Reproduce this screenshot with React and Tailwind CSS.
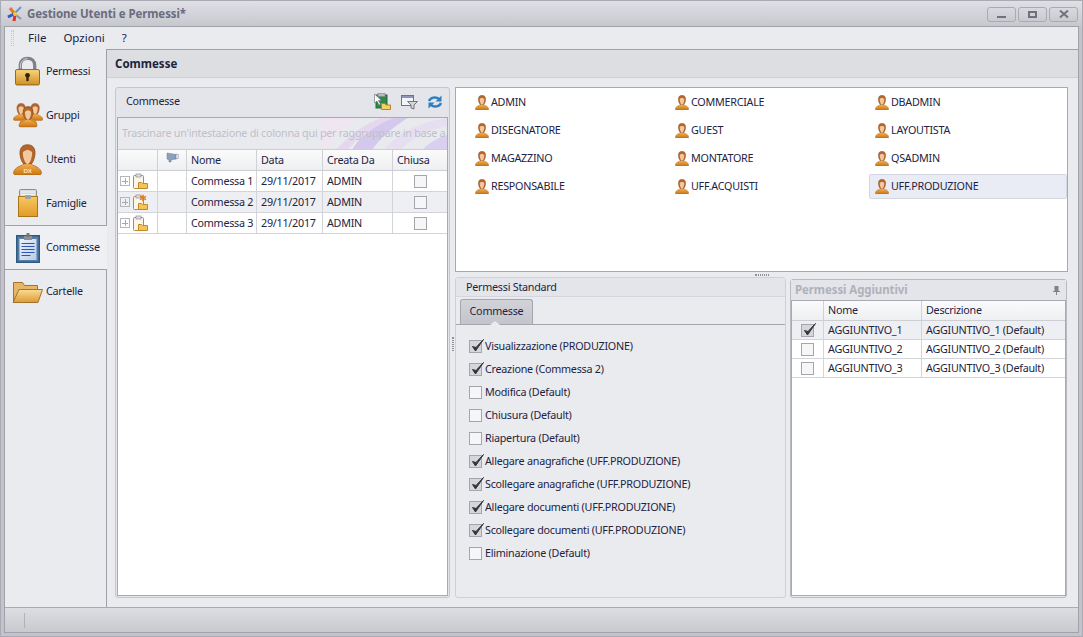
import React from "react";

const FONT = "font-['Noto_Sans','DejaVu_Sans',sans-serif]";
const ink = "text-[#1d2340]";

function Padlock() {
  return (
    <svg width="25" height="30" viewBox="0 0 26 30">
      <defs>
        <linearGradient id="lockB" x1="0" y1="0" x2="0" y2="1"><stop offset="0" stopColor="#f8d67c" /><stop offset="1" stopColor="#cf8f24" /></linearGradient>
      </defs>
      <path d="M5.500 14V9C5.500 4.500 8.500 1.800 13 1.800S20.500 4.500 20.500 9v5" fill="none" stroke="#7f8188" strokeWidth="3.400" />
      <path d="M5.800 12V9C5.800 5 8.800 2.200 13 2.200" fill="none" stroke="#d9dade" strokeWidth="1" />
      <rect x=".5" y="13.500" width="25" height="16" rx="1.500" fill="url(#lockB)" stroke="#96621a" />
      <circle cx="13" cy="19.500" r="2.500" fill="#33240e" />
      <rect x="11.800" y="19.500" width="2.400" height="6" fill="#33240e" />
    </svg>
  );
}

function Person({ x = 0, y = 0, s = 1, id = "p" }) {
  return (
    <g transform={`translate(${x} ${y}) scale(${s})`}>
      <path d="M0.500 28c.5-4 4-6 8.500-7.500l2-2h6l2 2c4.500 1.500 8 3.500 8.500 7.500 0 1.200-1 2-2 2H2.500c-1 0-2-.8-2-2z" fill={`url(#${id}B)`} stroke="#a9640f" strokeWidth=".7" />
      <path d="M14 .7c4.800 0 7.300 3 7.300 7.800 0 5-2.300 9.500-3.300 10.500h-8c-1-1-3.300-5.500-3.300-10.500C6.700 3.700 9.200.7 14 .7z" fill="#b4652a" stroke="#8a4c1c" strokeWidth=".7" />
      <path d="M9.500 8c1.500-1.500 2.500-2 4.500-2.500 2 .5 3 1 4.500 2.500.3 4-2 11.500-4.500 11.500S9.200 12 9.500 8z" fill="#f1c8a0" />
    </g>
  );
}

function PersonDefs({ id }) {
  return (
    <defs>
      <linearGradient id={`${id}B`} x1="0" y1="0" x2="0" y2="1"><stop offset="0" stopColor="#f5b355" /><stop offset="1" stopColor="#cc7512" /></linearGradient>
    </defs>
  );
}

function Group() {
  return (
    <svg width="30" height="27" viewBox="0 0 30 27">
      <PersonDefs id="g" />
      <Person id="g" x={0} y={1} s={0.58} />
      <Person id="g" x={14} y={1} s={0.58} />
      <Person id="g" x={6.500} y={4} s={0.62} />
      <Person id="g" x={5.500} y={4.500} s={0.68} />
    </svg>
  );
}

function User() {
  return (
    <svg width="29" height="31" viewBox="0 0 28 30">
      <PersonDefs id="u" />
      <Person id="u" />
      <text x="14" y="28" textAnchor="middle" fontSize="6" fontWeight="700" fill="#fbe3bd" fontFamily="Liberation Sans">DX</text>
    </svg>
  );
}

function SmallUser({ id }) {
  return (
    <svg width="14" height="15" viewBox="0 0 28 30" className="shrink-0">
      <PersonDefs id={id} />
      <Person id={id} />
    </svg>
  );
}

function BoxFolder() {
  return (
    <svg width="20" height="28" viewBox="0 0 20 28">
      <defs>
        <linearGradient id="bf" x1="0" y1="0" x2="0" y2="1"><stop offset="0" stopColor="#f6c964" /><stop offset="1" stopColor="#e29a25" /></linearGradient>
      </defs>
      <rect x="1.500" y=".5" width="17" height="9" rx="1" fill="#d8dade" stroke="#8b8d94" />
      <path d="M3 3h14M3 5.500h14" stroke="#f1f2f4" />
      <rect x=".5" y="7.500" width="19" height="20" fill="url(#bf)" stroke="#a8741c" />
      <rect x="7" y="6" width="6" height="4" rx="1" fill="#9fa1a8" />
    </svg>
  );
}

function Clipboard() {
  return (
    <svg width="24" height="31" viewBox="0 0 24 31">
      <defs>
        <linearGradient id="cl" x1="0" y1="0" x2="1" y2="1"><stop offset="0" stopColor="#eef3fb" /><stop offset="1" stopColor="#b8cdea" /></linearGradient>
      </defs>
      <rect x=".75" y="3.750" width="22.500" height="26.500" fill="#5b7da5" stroke="#2c5a80" strokeWidth="1.500" />
      <rect x="3.500" y="7" width="17" height="21" fill="url(#cl)" />
      <rect x="8" y="4" width="8" height="4" fill="#8d8f96" />
      <rect x="10.500" y="1" width="3" height="4" fill="#77797f" />
      <path d="M5.500 11.500h13M5.500 14.500h13M5.500 17.500h13M5.500 20.500h13M5.500 23.500h9" stroke="#2f55b8" />
    </svg>
  );
}

function BigFolder() {
  return (
    <svg width="31" height="23" viewBox="0 0 31 23">
      <defs>
        <linearGradient id="ff" x1="0" y1="0" x2="0" y2="1"><stop offset="0" stopColor="#fbdb95" /><stop offset="1" stopColor="#dd9a36" /></linearGradient>
      </defs>
      <path d="M1.500 21V2.500h9l2 3h13v4H8z" fill="#e6b765" stroke="#a5722a" />
      <path d="M1 22.500 7 9.500h23.500l-4.500 13z" fill="url(#ff)" stroke="#a5722a" />
    </svg>
  );
}

function SmallClip({ star }) {
  return (
    <svg width="15" height="16" viewBox="0 0 15 16" className="shrink-0">
      <rect x=".5" y="2.500" width="10" height="13" rx="1" fill="#fdf6e6" stroke="#b88a3a" />
      <rect x="3" y="1" width="5" height="3" fill="#dfe0e4" stroke="#8b8d94" strokeWidth=".7" />
      <path d="M5.500 9.500h3l1 1h5v5h-9z" fill="#f6c355" stroke="#c2892a" />
      {star && <path d="M10 .8v6.400M7 2.400l6 3.200M13 2.400 7 5.600" stroke="#e07a1c" strokeWidth="1.500" />}
    </svg>
  );
}

function Check({ on }) {
  return (
    <span className={`relative block w-[13px] h-[13px] shrink-0 border border-[#a4a5ad] ${on ? "bg-[#d5d6dc]" : "bg-[#f6f6f8]"}`}>
      {on && (
        <svg width="17" height="17" viewBox="0 0 17 17" className="absolute left-[-1px] top-[-4px]">
          <path d="M3.500 9.500 6.500 14 14.500 2.500 7 10.500z" fill="#33353d" stroke="#33353d" strokeWidth="1" strokeLinejoin="round" />
        </svg>
      )}
    </span>
  );
}

function NavItem({ icon, label, active, top }) {
  return (
    <div className={`h-[44px] flex items-center shrink-0 ${active ? "bg-[#eef0f4]" : "border-r border-[#9fa0a8]"} ${top ? "border-t border-[#9fa0a8]" : ""}`}>
      <div className="w-[41px] flex justify-center shrink-0 pl-[4px]">{icon}</div>
      <span className={`${ink}`}>{label}</span>
    </div>
  );
}

function Grip({ vertical }) {
  return vertical ? (
    <div className="w-[2px] h-[14px] border-x border-dotted border-[#8f9098]" />
  ) : (
    <div className="w-[14px] h-[2px] border-y border-dotted border-[#8f9098]" />
  );
}

const cell = "border-r border-b border-[#d3d4da] flex items-center overflow-hidden whitespace-nowrap";

function GridRow({ n, star, alt }) {
  return (
    <div className={`flex h-[21px] shrink-0 ${alt ? "bg-[#eeeff2]" : "bg-white"}`}>
      <div className={`${cell} w-[40px] pl-[2px] gap-[3px]`}>
        <span className="w-[10px] h-[10px] border border-[#b5b6bd] flex items-center justify-center shrink-0 relative">
          <span className="w-[6px] h-[1px] bg-[#a5a6ae] absolute" />
          <span className="w-[1px] h-[6px] bg-[#a5a6ae] absolute" />
        </span>
        <SmallClip star={star} />
      </div>
      <div className={`${cell} w-[29px]`} />
      <div className={`${cell} w-[70px] pl-[4px]`}>Commessa {n}</div>
      <div className={`${cell} w-[66px] pl-[4px]`}>29/11/2017</div>
      <div className={`${cell} w-[70px] pl-[4px]`}>ADMIN</div>
      <div className={`${cell} flex-1 justify-center border-r-0`}><Check /></div>
    </div>
  );
}

const headCell = "border-r border-[#d0d1d7] flex items-center whitespace-nowrap";

const users = ["ADMIN", "COMMERCIALE", "DBADMIN", "DISEGNATORE", "GUEST", "LAYOUTISTA", "MAGAZZINO", "MONTATORE", "QSADMIN", "RESPONSABILE", "UFF.ACQUISTI", "UFF.PRODUZIONE"];

const perms = [
  ["Visualizzazione (PRODUZIONE)", true],
  ["Creazione (Commessa 2)", true],
  ["Modifica (Default)", false],
  ["Chiusura (Default)", false],
  ["Riapertura (Default)", false],
  ["Allegare anagrafiche (UFF.PRODUZIONE)", true],
  ["Scollegare anagrafiche (UFF.PRODUZIONE)", true],
  ["Allegare documenti (UFF.PRODUZIONE)", true],
  ["Scollegare documenti (UFF.PRODUZIONE)", true],
  ["Eliminazione (Default)", false],
];

export default function App() {
  return (
    <div className={`w-[1083px] h-[637px] flex flex-col overflow-hidden bg-[#c3c4cb] border-x border-b border-[#a9aab3] ${FONT} text-[10.750px] tracking-[-0.25px] leading-none ${ink}`}>
      {/* title */}
      <div className="h-[26px] shrink-0 flex items-center bg-gradient-to-b from-[#dfe0e4] to-[#c7c8ce] border-t border-[#a9aab3] pl-[6px] pr-[4px]">
        <svg width="16" height="16" viewBox="0 0 16 16" className="shrink-0">
          <path d="M3 2l4 5" stroke="#e0792a" strokeWidth="3" />
          <path d="M14 1L8 7" stroke="#6f8fd0" strokeWidth="2" />
          <path d="M1 11l6-3" stroke="#3a54c8" strokeWidth="3" />
          <path d="M8 9l-1 6" stroke="#d8352e" strokeWidth="3" />
          <path d="M9 9l5 4" stroke="#8b94a8" strokeWidth="2" />
          <circle cx="8" cy="8" r="2" fill="#f2c92e" />
        </svg>
        <span className="ml-[4px] font-bold text-[#6a6c7f] text-[11.500px] tracking-[-0.1px]">Gestione Utenti e Permessi*</span>
        <div className="ml-auto flex gap-[2px] pt-[1px]">
          {["min", "max", "close"].map((k) => (
            <div key={k} className="w-[29px] h-[15px] rounded-[3px] border border-[#a9aab3] bg-gradient-to-b from-[#d9dadf] to-[#c9cad0] flex items-center justify-center">
              {k === "min" && <span className="w-[9px] h-[2px] bg-[#70717c] mt-[5px]" />}
              {k === "max" && <span className="w-[9px] h-[7px] border-2 border-[#70717c]" />}
              {k === "close" && (
                <svg width="10" height="8" viewBox="0 0 10 8"><path d="M1 .5l8 7M9 .5l-8 7" stroke="#70717c" strokeWidth="2" /></svg>
              )}
            </div>
          ))}
        </div>
      </div>
      {/* body */}
      <div className="flex-1 min-h-0 mx-[3px] border border-[#a0a1a9] flex flex-col bg-[#eaebef]">
        <div className="h-[22px] shrink-0 flex items-center text-[11.500px] tracking-normal pl-[6px]">
          <div className="w-[3px] h-[16px] border-x border-dotted border-[#c5c6cc] mr-[14px]" />
          <span>File</span>
          <span className="ml-[17px]">Opzioni</span>
          <span className="ml-[17px]">?</span>
        </div>
        <div className="flex-1 min-h-0 flex">
          {/* nav */}
          <div className="w-[102px] shrink-0 flex flex-col">
            <NavItem icon={<Padlock />} label="Permessi" />
            <NavItem icon={<Group />} label="Gruppi" />
            <NavItem icon={<User />} label="Utenti" />
            <NavItem icon={<BoxFolder />} label="Famiglie" />
            <NavItem active top icon={<Clipboard />} label="Commesse" />
            <NavItem top icon={<BigFolder />} label="Cartelle" />
            <div className="flex-1 border-r border-[#9fa0a8]" />
          </div>
          {/* main */}
          <div className="flex-1 min-w-0 flex flex-col border-t border-[#9fa0a8]">
            <div className="h-[28px] shrink-0 bg-[#dddee2] border-b border-[#cfd0d6] flex items-center pl-[8px] font-bold text-[11.500px] tracking-normal">Commesse</div>
            <div className="flex-1 min-h-0 flex pl-[8px] pr-[10px] pt-[9px] pb-[9px]">
              {/* left card */}
              <div className="w-[335px] shrink-0 flex flex-col rounded-[3px] border border-[#c6c7cd] bg-[#e4e5ea]">
                <div className="h-[29px] shrink-0 flex items-center pl-[10px] pr-[6px] pb-[2px]">
                  <span>Commesse</span>
                  <div className="ml-auto flex items-center gap-[10px]">
                    <svg width="17" height="17" viewBox="0 0 17 17">
                      <rect x="2" y="2" width="11" height="13" fill="#2f8a4a" stroke="#1f6a38" />
                      <rect x="4" y=".5" width="7" height="3" fill="#b9bbc2" stroke="#7f8188" strokeWidth=".6" />
                      <path d="M.5 1v9l2.500-2 2 4 1.500-.8-2-3.700h3z" fill="#fff" stroke="#6d7078" strokeWidth=".6" />
                      <path d="M7.500 10.500h3.500l1 1.500h4.500v4.500h-9z" fill="#f8cf62" stroke="#b98428" />
                    </svg>
                    <svg width="17" height="16" viewBox="0 0 17 16">
                      <rect x=".5" y="1.500" width="12" height="10" fill="#f4f5f8" stroke="#6c70a0" />
                      <rect x="1" y="2" width="11" height="2" fill="#8f93c0" />
                      <path d="M6.500 7.500h10l-3.500 3.500v4l-3-1v-3z" fill="#d4d5da" stroke="#75767e" />
                    </svg>
                    <svg width="16" height="14" viewBox="0 0 16 14" className="-ml-[1px]">
                      <path d="M2 6a6 5 0 0 1 10-2" fill="none" stroke="#2f7ec0" strokeWidth="2.500" />
                      <path d="M14.500 .5v6h-6z" fill="#2f7ec0" />
                      <path d="M14 8a6 5 0 0 1-10 2" fill="none" stroke="#2f7ec0" strokeWidth="2.500" />
                      <path d="M1.500 13.500v-6h6z" fill="#2f7ec0" />
                    </svg>
                  </div>
                </div>
                <div className="flex-1 min-h-0 mx-[1px] mb-[1px] border border-[#a8a9b1] flex flex-col bg-white">
                  <div className="relative h-[32px] shrink-0 bg-[#e9eaee] border-b border-[#cdced4] flex items-center pl-[4px] overflow-hidden whitespace-nowrap">
                    <svg width="125" height="32" viewBox="0 0 125 32" className="absolute right-0 top-0">
                      <path d="M0 0h34C22 10 10 22 2 32H0z" fill="#f0e6f2" />
                      <path d="M14 32C28 16 44 6 58 0h14C50 8 34 20 26 32z" fill="#e5d8ee" />
                      <path d="M30 32C40 14 60 4 72 0h14C72 8 58 20 50 32z" fill="#d4c8ec" />
                      <path d="M62 32C76 14 98 4 125 0v8C105 12 88 22 78 32z" fill="#e6def1" />
                      <path d="M100 32c6-6 14-12 25-15v15z" fill="#d8d0ee" />
                    </svg>
                    <span className="relative text-[#bfc0c8]">Trascinare un'intestazione di colonna qui per raggruppare in base a</span>
                  </div>
                  <div className="flex h-[21px] shrink-0 bg-gradient-to-b from-[#fbfbfc] to-[#eeeff2] border-b border-[#cdced4]">
                    <div className={`${headCell} w-[40px]`} />
                    <div className={`${headCell} w-[29px] justify-center items-start pt-[2px]`}>
                      <svg width="13" height="11" viewBox="0 0 13 11">
                        <path d="M1 1l9 1.500V7L5 8v2H3V8L1 7z" fill="#8aa0bd" stroke="#6d7d94" strokeWidth=".5" />
                        <path d="M10 2l3 1v3l-3 1z" fill="#e3e6ec" stroke="#6d7d94" strokeWidth=".5" />
                      </svg>
                    </div>
                    <div className={`${headCell} w-[70px] pl-[4px]`}>Nome</div>
                    <div className={`${headCell} w-[66px] pl-[4px]`}>Data</div>
                    <div className={`${headCell} w-[70px] pl-[4px]`}>Creata Da</div>
                    <div className="flex-1 flex items-center pl-[4px]">Chiusa</div>
                  </div>
                  <GridRow n={1} />
                  <GridRow n={2} star alt />
                  <GridRow n={3} />
                </div>
              </div>
              {/* vertical splitter */}
              <div className="w-[5px] shrink-0 flex justify-center items-start pt-[250px]">
                <Grip vertical />
              </div>
              {/* right column */}
              <div className="flex-1 min-w-0 flex flex-col">
                <div className="h-[185px] shrink-0 border border-[#a8a9b1] bg-white grid grid-cols-[200px_200px_198px] auto-rows-[28px] pl-[14px]">
                  {users.map((u, i) => (
                    <div key={u} className={`flex items-center gap-[2px] pl-[5px] whitespace-nowrap ${u === "UFF.PRODUZIONE" ? "bg-[#e9ebf5] rounded-[2px] border border-[#d5d7e0] -ml-[1px] mr-[1px] mb-[1px] mt-[2px]" : ""}`}>
                      <SmallUser id={`s${i}`} />
                      <span>{u}</span>
                    </div>
                  ))}
                </div>
                <div className="h-[5px] shrink-0 flex items-center justify-center">
                  <Grip />
                </div>
                <div className="flex-1 min-h-0 flex gap-[4px]">
                  {/* standard */}
                  <div className="w-[331px] shrink-0 rounded-[3px] border border-[#cfd0d6] flex flex-col">
                    <div className="h-[19px] shrink-0 flex items-center pl-[10px] bg-[#e4e5ea] border-b border-[#d6d7dc]">Permessi Standard</div>
                    <div className="relative h-[28px] shrink-0 pl-[4px] pt-[2px] border-b border-[#a4a5ad]">
                      <div className="w-[73px] h-[25px] pb-[1px] rounded-t-[3px] border border-b-0 border-[#a4a5ad] bg-gradient-to-b from-[#d2d3d9] to-[#c4c5cc] flex items-center justify-center">Commesse</div>
                      <div className="absolute left-[34px] bottom-[-1px] w-0 h-0 border-x-[5px] border-x-transparent border-b-[4px] border-b-[#eaebef]" />
                    </div>
                    <div className="flex flex-col gap-[10px] pl-[13px] pt-[15px]">
                      {perms.map(([t, on]) => (
                        <div key={t} className="h-[13px] flex items-center gap-[3px] whitespace-nowrap">
                          <Check on={on} />
                          <span>{t}</span>
                        </div>
                      ))}
                    </div>
                  </div>
                  {/* extra */}
                  <div className="w-[277px] shrink-0 rounded-[3px] border border-[#b9bac1] flex flex-col mt-[2px] pb-[1px]">
                    <div className="h-[20px] shrink-0 flex items-center pl-[4px] pr-[6px] font-bold text-[#b0b1b9] text-[11.500px] tracking-[-0.1px] bg-[#e4e5ea]">
                      <span>Permessi Aggiuntivi</span>
                      <svg width="7" height="9" viewBox="0 0 7 9" className="ml-auto"><path d="M1.500 0h4v5H7v1H4v3H3V6H0V5h1.500z" fill="#80818a" /></svg>
                    </div>
                    <div className="flex-1 min-h-0 border border-[#a8a9b1] bg-white flex flex-col">
                      <div className="flex h-[20px] shrink-0 bg-gradient-to-b from-[#fbfbfc] to-[#eeeff2] border-b border-[#cdced4]">
                        <div className={`${headCell} w-[32px]`} />
                        <div className={`${headCell} w-[98px] pl-[4px]`}>Nome</div>
                        <div className="flex-1 flex items-center pl-[4px]">Descrizione</div>
                      </div>
                      {[1, 2, 3].map((n) => (
                        <div key={n} className={`flex h-[19px] shrink-0 ${n === 1 ? "bg-[#eeeff2]" : "bg-white"}`}>
                          <div className={`${cell} w-[32px] justify-center`}><Check on={n === 1} /></div>
                          <div className={`${cell} w-[98px] pl-[4px]`}>AGGIUNTIVO_{n}</div>
                          <div className={`${cell} flex-1 pl-[4px] border-r-0`}>AGGIUNTIVO_{n} (Default)</div>
                        </div>
                      ))}
                    </div>
                  </div>
                </div>
              </div>
            </div>
          </div>
        </div>
        {/* status */}
        <div className="h-[25px] shrink-0 border-t border-[#a9aab3] bg-gradient-to-b from-[#dcdde1] to-[#c9cad0] flex items-center pl-[19px]">
          <div className="w-[1px] h-[15px] bg-[#b0b1b9]" />
        </div>
      </div>
      <div className="h-[3px] shrink-0" />
    </div>
  );
}
